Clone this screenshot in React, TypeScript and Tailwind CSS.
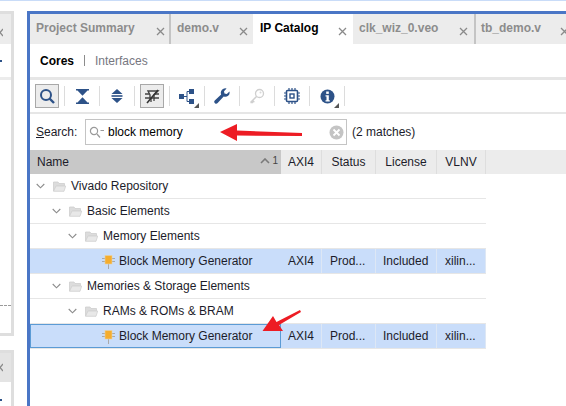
import React from 'react';

const FONT = 'font-["Liberation_Sans",Arial,sans-serif]';

const TABS = [
  { label: 'Project Summary', box: 'w-[141px] pl-[6px] pr-[4px] border-r-2 border-[#c4c4c4]' },
  { label: 'demo.v', box: 'w-[82px] pl-[6px] pr-[5px]' },
  { label: 'IP Catalog', box: 'w-[100px] pl-[7px] pr-[6px]', active: true },
  { label: 'clk_wiz_0.veo', box: 'w-[123px] pl-[6px] pr-[6px] border-r-2 border-[#c4c4c4]' },
  { label: 'tb_demo.v', box: 'w-[99px] pl-[5px] pr-[6px]' },
];

const COLUMNS = [
  { label: 'AXI4', width: 'w-[41px]', cell: 'AXI4', pad: 'pl-[7px]' },
  { label: 'Status', width: 'w-[54px]', cell: 'Prod...', pad: 'pl-[8px]' },
  { label: 'License', width: 'w-[61px]', cell: 'Included', pad: 'pl-[7px]' },
  { label: 'VLNV', width: 'w-[49px]', cell: 'xilin...', pad: 'pl-[8px]' },
];

const ROWS = [
  { label: 'Vivado Repository', level: 0 },
  { label: 'Basic Elements', level: 1 },
  { label: 'Memory Elements', level: 2 },
  { label: 'Block Memory Generator', level: 3, core: true },
  { label: 'Memories & Storage Elements', level: 1 },
  { label: 'RAMs & ROMs & BRAM', level: 2 },
  { label: 'Block Memory Generator', level: 3, core: true, focused: true },
];

const INDENT = ['pl-[5px]', 'pl-[21px]', 'pl-[37px]', 'pl-[70px]'];

const BLUE = '#2d5288';

const CloseIcon = () => (
  <svg width="9" height="9" viewBox="0 0 9 9" className="shrink-0">
    <path d="M1 1l7 7M8 1L1 8" stroke="#8a8a8a" strokeWidth="1.3" />
  </svg>
);

const Chevron = () => (
  <svg width="9" height="6" viewBox="0 0 9 6" className="shrink-0">
    <path d="M.7 1l3.800 3.800L8.300 1" fill="none" stroke="#8c8c8c" strokeWidth="1.1" />
  </svg>
);

const Folder = () => (
  <svg width="13" height="11" viewBox="0 0 13 11" className="ml-[8px] shrink-0">
    <path d="M.5 1h4.500l1 1.500h5.500V5H3.500L.5 10z" fill="#dcdcdc" stroke="#cecece" strokeWidth="0.8" />
    <path d="M3 5h9.700L11 10.300H.5z" fill="#e8e8e8" stroke="#d0d0d0" strokeWidth="0.8" />
  </svg>
);

const CoreIcon = () => (
  <svg width="13" height="14" viewBox="0 0 13 14" className="ml-px mt-[2px] shrink-0">
    <path d="M0 3.500h13M0 6.500h13M6.500 9v5" stroke="#a9a9a9" strokeWidth="1" />
    <rect x="3" y="0.500" width="7" height="8.500" fill="#f5ad2e" stroke="#ecd2a0" strokeWidth="0.6" />
  </svg>
);

const DropMark = () => (
  <svg width="5" height="5" viewBox="0 0 5 5" className="absolute right-0 bottom-0">
    <path d="M5 0v5H0z" fill="#555" />
  </svg>
);

const ToolSep = () => <div className="h-[20px] w-px shrink-0 bg-[#dcdcdc]" />;

const ToolButton = ({ pressed, children }: { pressed?: boolean; children: React.ReactNode }) => (
  <div
    className={`relative flex h-[24px] w-[24px] shrink-0 items-center justify-center ${
      pressed ? 'border border-[#a8a8a8] bg-[#ececec]' : ''
    }`}
  >
    {children}
  </div>
);

const Toolbar = () => (
  <div className="flex h-[32px] items-center gap-[5px] pl-[5px]">
    <ToolButton pressed>
      <svg width="16" height="16" viewBox="0 0 16 16">
        <circle cx="7" cy="7" r="5" fill="none" stroke={BLUE} strokeWidth="2" />
        <path d="M10.500 10.500L15 15" stroke={BLUE} strokeWidth="2.400" />
      </svg>
    </ToolButton>
    <ToolSep />
    <ToolButton>
      <svg width="13" height="15" viewBox="0 0 13 15">
        <path d="M0 0h13v1.500h-1.500L6.500 6.800 1.500 1.500H0zM0 15h13v-1.500h-1.500L6.500 8.200 1.500 13.500H0z" fill={BLUE} />
      </svg>
    </ToolButton>
    <ToolSep />
    <ToolButton>
      <svg width="12" height="14" viewBox="0 0 12 14">
        <path d="M6 0l5.500 5H.5zM6 14L.5 9h11z" fill={BLUE} />
        <path d="M.5 7h11" stroke={BLUE} strokeWidth="1.600" />
      </svg>
    </ToolButton>
    <ToolSep />
    <ToolButton pressed>
      <svg width="16" height="15" viewBox="0 0 16 15">
        <path d="M4 2h10L10 6v3H6V6z" fill="none" stroke="#444" strokeWidth="1.400" />
        <path d="M1 5h4M11 5h4M1 9h5M10 9h5M7 9v4M10 9v3" stroke="#444" strokeWidth="1.300" />
        <path d="M3 14L14 1" stroke="#333" strokeWidth="1.600" />
      </svg>
    </ToolButton>
    <ToolSep />
    <ToolButton>
      <svg width="16" height="15" viewBox="0 0 16 15">
        <rect x="0" y="5" width="5" height="5" fill={BLUE} />
        <rect x="10" y="0" width="5" height="5" fill={BLUE} />
        <rect x="10" y="10" width="5" height="5" fill={BLUE} />
        <path d="M5 7.500h3M8 2.500v10M8 2.500h2M8 12.500h2" fill="none" stroke={BLUE} strokeWidth="1" />
      </svg>
      <DropMark />
    </ToolButton>
    <ToolSep />
    <ToolButton>
      <svg width="16" height="16" viewBox="0 0 15 15">
        <path d="M14.500 3.200a4 4 0 0 1-5.400 4.700L3.400 14a1.700 1.700 0 0 1-2.700-2.300l6-5.700A4.200 4.200 0 0 1 11.800.4L9.400 3l.4 2.200 2.200.5z" fill={BLUE} />
      </svg>
    </ToolButton>
    <ToolSep />
    <ToolButton>
      <svg width="16" height="16" viewBox="0 0 16 16">
        <circle cx="10.500" cy="5.500" r="4" fill="none" stroke="#cfcfcf" strokeWidth="1.300" />
        <circle cx="11.500" cy="4.500" r="1" fill="#d8d8d8" />
        <path d="M7.500 8.500L1.500 14.500M1.500 14.500h2.500M3.500 12.500l1.800 1.800" fill="none" stroke="#cfcfcf" strokeWidth="1.500" />
      </svg>
    </ToolButton>
    <ToolSep />
    <ToolButton>
      <svg width="16" height="16" viewBox="0 0 16 16">
        <rect x="2.500" y="2.500" width="11" height="11" rx="1" fill="none" stroke={BLUE} strokeWidth="1.600" />
        <rect x="6" y="6" width="4" height="4" fill="none" stroke={BLUE} strokeWidth="1.400" />
        <path d="M5 0v2M8 0v2M11 0v2M5 14v2M8 14v2M11 14v2M0 5h2M0 8h2M0 11h2M14 5h2M14 8h2M14 11h2" stroke={BLUE} strokeWidth="1.200" />
      </svg>
    </ToolButton>
    <ToolSep />
    <ToolButton>
      <svg width="15" height="15" viewBox="0 0 15 15">
        <circle cx="7.500" cy="7.500" r="7" fill={BLUE} />
        <rect x="6.200" y="2.500" width="2.600" height="2.400" fill="#fff" />
        <path d="M5.500 6.200h3.300v5h1v1.400H5.500v-1.400h1V7.600h-1z" fill="#fff" />
      </svg>
      <DropMark />
    </ToolButton>
    <ToolSep />
  </div>
);

const ClippedClose = () => (
  <svg width="3" height="9" viewBox="0 0 3 9">
    <path d="M3 1L0 4.500L3 8" fill="none" stroke="#8a8a8a" strokeWidth="1.300" />
  </svg>
);

const SidePanel = () => (
  <div className="flex h-full w-[27px] shrink-0 flex-col pt-[11px]">
    <div className="flex h-[325px] w-[14px] flex-col border-y-[3px] border-r-[3px] border-[#dedede]">
      <div className="flex h-[30px] shrink-0 items-center bg-[#ececec] pt-[6px]">
        <ClippedClose />
      </div>
      <div className="flex h-[33px] shrink-0 items-center">
        <div className="h-[2px] w-[2px] bg-[#2d5288]" />
      </div>
      <div className="h-[3px] shrink-0 bg-[#ececec]" />
      <div className="mt-[225px] border-t border-dashed border-[#9a9a9a]" />
    </div>
    <div className="mt-[14px] flex w-[14px] flex-1 flex-col border-t-[3px] border-r-[3px] border-[#dedede]">
      <div className="flex h-[29px] shrink-0 items-center bg-[#e4e4e4]">
        <ClippedClose />
      </div>
      <div className="flex flex-1 items-end pb-[5px]">
        <div className="h-[2px] w-[2px] bg-[#2d5288]" />
      </div>
    </div>
  </div>
);

export default function App() {
  return (
    <div className={`relative flex h-[406px] w-[566px] overflow-hidden bg-white text-[12px] text-[#1c1c2a] ${FONT}`}>
      <div className="absolute inset-x-0 top-0 h-px bg-[#c9dcf8]" />
      <SidePanel />
      <div className="mt-[11px] flex min-w-0 flex-1 flex-col border-t-[3px] border-l-[3px] border-[#4a76c6]">
        {/* Tabs */}
        <div className="flex h-[30px] shrink-0 bg-[#ececec]">
          {TABS.map((tab) => (
            <div
              key={tab.label}
              className={`flex shrink-0 items-start justify-between font-bold ${tab.box} ${
                tab.active ? 'bg-white text-black' : 'text-[#8c8c8c]'
              }`}
            >
              <span className="mt-[6px] leading-[16px] whitespace-nowrap">{tab.label}</span>
              <span className="mt-[13px]"><CloseIcon /></span>
            </div>
          ))}
        </div>

        {/* Cores / Interfaces */}
        <div className="flex h-[33px] shrink-0 items-center pl-[10px]">
          <span className="font-bold text-black">Cores</span>
          <span className="mx-[10px] h-[11px] w-px bg-[#8c8c8c]" />
          <span className="text-[#77777f]">Interfaces</span>
        </div>
        <div className="h-[3px] shrink-0 bg-[#e6e6e6]" />

        <Toolbar />
        <div className="h-[2px] shrink-0 bg-[#e6e6e6]" />

        {/* Search */}
        <div className="flex h-[36px] shrink-0 items-center pl-[6px]">
          <span className="w-[49px] shrink-0"><span className="underline">S</span>earch:</span>
          <div className="flex h-[26px] w-[262px] shrink-0 items-center border border-[#c4c4c4] pr-[2px] pl-[3px]">
            <svg width="15" height="12" viewBox="0 0 15 12" className="shrink-0">
              <circle cx="5" cy="5" r="3.600" fill="none" stroke="#9a9a9a" strokeWidth="1.200" />
              <path d="M8 8l3 3.500M11.500 4.500h3.500" stroke="#9a9a9a" strokeWidth="1.200" />
            </svg>
            <span className="ml-[4px] flex-1 text-black">block memory</span>
            <svg width="15" height="15" viewBox="0 0 15 15" className="shrink-0">
              <circle cx="7.500" cy="7.500" r="7" fill="#c4c4c4" />
              <path d="M4.500 4.500l6 6M10.500 4.500l-6 6" stroke="#fff" strokeWidth="1.800" />
            </svg>
          </div>
          <span className="ml-[5px]">(2 matches)</span>
        </div>

        {/* Table header */}
        <div className="flex h-[24px] shrink-0 bg-[#ececec]">
          <div className="flex w-[251px] shrink-0 items-center justify-between bg-[#c8c8c8] pr-[3px] pl-[7px]">
            <span>Name</span>
            <span className="flex items-center gap-[2px] self-start pt-[3px] text-[10px] text-[#444]">
              <svg width="10" height="6" viewBox="0 0 10 6"><path d="M1 5l4-4 4 4" fill="none" stroke="#7a7a7a" strokeWidth="1.600" /></svg>
              1
            </span>
          </div>
          {COLUMNS.map((col) => (
            <div key={col.label} className={`flex shrink-0 items-center justify-center border-r border-[#dedede] ${col.width}`}>
              {col.label}
            </div>
          ))}
        </div>

        {/* Rows */}
        {ROWS.map((row, i) => (
          <div
            key={i}
            className={`flex h-[25px] w-[456px] shrink-0 border-b border-[#e6e6e6] ${row.core ? 'bg-[#c9ddfa]' : ''}`}
          >
            <div
              className={`flex w-[251px] shrink-0 items-center border ${INDENT[row.level]} ${
                row.focused ? 'border-[#5b9bd5]' : 'border-transparent'
              }`}
            >
              {row.core ? <CoreIcon /> : (<><Chevron /><Folder /></>)}
              <span className={`whitespace-nowrap ${row.core ? 'ml-[4px]' : 'ml-[5px]'}`}>{row.label}</span>
            </div>
            {row.core &&
              COLUMNS.map((col) => (
                <div key={col.label} className={`flex shrink-0 items-center border-r border-[#dde7f5] ${col.width} ${col.pad}`}>
                  {col.cell}
                </div>
              ))}
          </div>
        ))}
      </div>

      {/* Red annotation arrows over the screenshot */}
      <svg className="pointer-events-none absolute top-0 left-0" width="566" height="406" viewBox="0 0 566 406">
        <path d="M220 132L237 124L237 130.500L302 133L302 136L237 135.500L237 141z" fill="#ed1c24" />
        <path d="M262.500 331L273 316L276.500 322L300 310L301 312L279 325L283 331z" fill="#ed1c24" />
      </svg>
    </div>
  );
}
